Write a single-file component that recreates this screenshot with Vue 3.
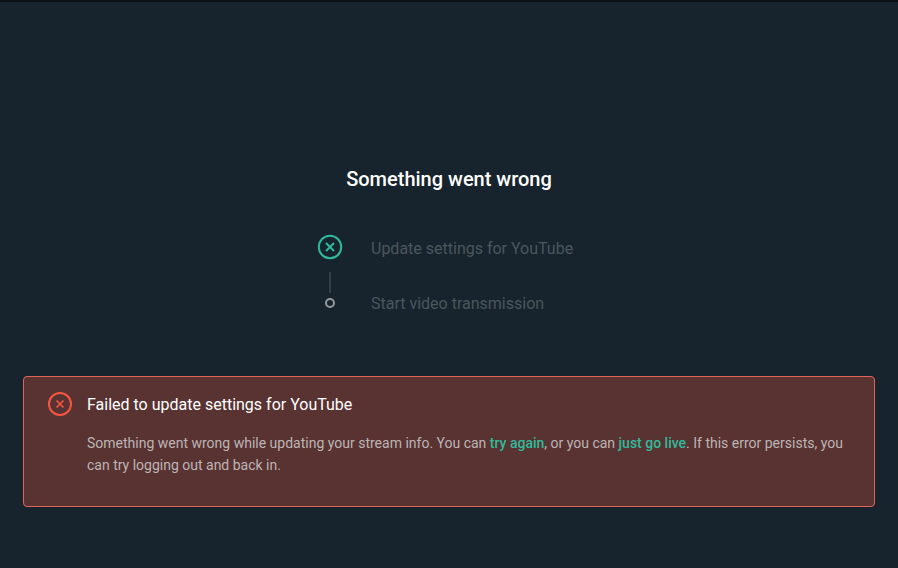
<script setup>
const steps = [
  { id: 1, label: "Update settings for YouTube", failed: true },
  { id: 2, label: "Start video transmission", failed: false },
];
</script>

<template>
  <div class="page">
    <div class="topbar"></div>
    <h1 class="title">Something went wrong</h1>

    <div class="steps">
      <template v-for="(step, idx) in steps" :key="step.id">
        <div class="step">
          <div class="marker">
            <svg v-if="step.failed" width="26" height="26" viewBox="0 0 26 26" fill="none">
              <circle cx="13" cy="13" r="11.2" stroke="#2fbb9b" stroke-width="2" />
              <path d="M9 9L17 17M17 9L9 17" stroke="#2fbb9b" stroke-width="2" />
            </svg>
            <span v-else class="dot"></span>
          </div>
          <span class="label">{{ step.label }}</span>
        </div>
        <div v-if="idx < steps.length - 1" class="line-row"><span class="line"></span></div>
      </template>
    </div>

    <div class="alert">
      <div class="alert-head">
        <svg width="26" height="26" viewBox="0 0 26 26" fill="none">
          <circle cx="13" cy="13" r="11" stroke="#f85640" stroke-width="2" />
          <path d="M9.5 9.5L16.5 16.5M16.5 9.5L9.5 16.5" stroke="#f85640" stroke-width="1.7" />
        </svg>
        <span class="alert-title">Failed to update settings for YouTube</span>
      </div>
      <p class="alert-text">
        Something went wrong while updating your stream info. You can
        <a class="link">try again</a>, or you can <a class="link">just go live</a>. If this
        error persists, you can try logging out and back in.
      </p>
    </div>
  </div>
</template>

<style scoped>
.page {
  width: 898px;
  height: 568px;
  background: #17242d;
  font-family: Roboto, "Liberation Sans", sans-serif;
  display: flex;
  flex-direction: column;
  overflow: hidden;
}

.topbar {
  height: 2px;
  background: #0b1116;
}

.title {
  margin: 164px 0 0;
  height: 26px;
  line-height: 26px;
  font-size: 20px;
  font-weight: 500;
  color: #ffffff;
  text-align: center;
}

.steps {
  margin: 42px 0 0 317px;
  display: flex;
  flex-direction: column;
}

.step {
  display: flex;
  align-items: center;
  height: 26px;
}

.marker {
  width: 26px;
  height: 26px;
  display: flex;
  align-items: center;
  justify-content: center;
  flex-shrink: 0;
}

.dot {
  width: 10px;
  height: 10px;
  margin-top: 2px;
  box-sizing: border-box;
  border: 2.5px solid #94989a;
  border-radius: 50%;
}

.label {
  margin: 2px 0 0 28px;
  font-size: 16px;
  color: #4b565d;
}

.line-row {
  width: 26px;
  height: 29px;
  display: flex;
  justify-content: center;
  align-items: flex-start;
}

.line {
  width: 2px;
  height: 21px;
  margin-top: 12px;
  flex-shrink: 0;
  background: #333f47;
}

.alert {
  margin: 61px 23px 0;
  height: 131px;
  box-sizing: border-box;
  background: #593232;
  border: 1px solid #e0645a;
  border-radius: 4px;
  padding: 14px 23px 0;
}

.alert-head {
  display: flex;
  align-items: center;
  gap: 14px;
}

.alert-title {
  font-size: 16px;
  font-weight: 400;
  color: #ffffff;
}

.alert-text {
  margin: 15px 0 0 40px;
  font-size: 14px;
  line-height: 22px;
  color: #bdb5b5;
}

.link {
  color: #2fbb9b;
  font-weight: 500;
}
</style>
